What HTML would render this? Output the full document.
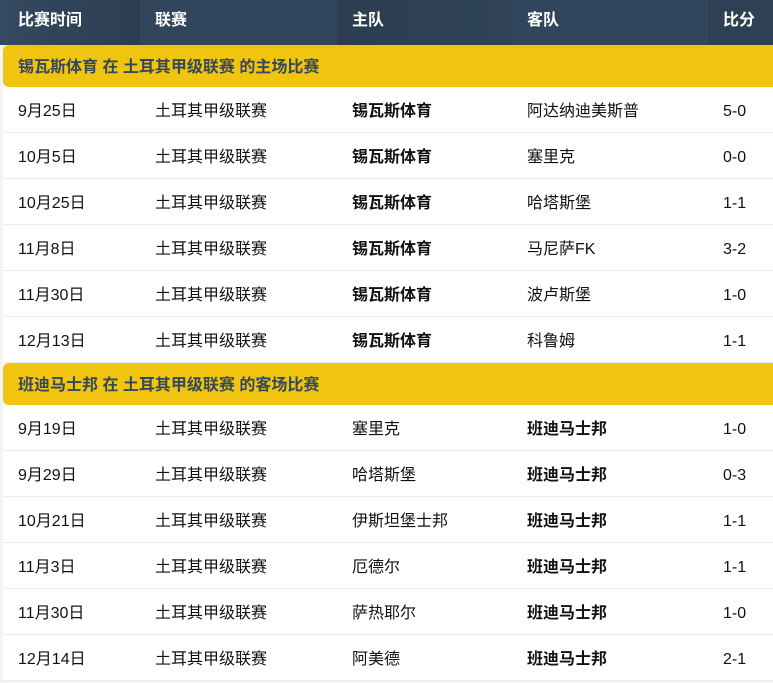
<!DOCTYPE html>
<html><head><meta charset="utf-8"><style>
body{margin:0;background:#f4f4f4;font-family:"Liberation Sans","Noto Sans CJK SC",sans-serif;width:773px;height:683px;overflow:hidden}
.w{position:absolute;left:3px;top:0;width:770px}
.h{position:relative;height:45px;background:#2f4256;color:#fff;font-weight:bold;font-size:16px}
.h div{position:absolute;top:0;height:45px;line-height:42px}
.b{position:relative;height:42px;background:#f1c40f;color:#34495e;font-weight:bold;font-size:16px;line-height:45px;padding-left:15px;border-radius:6px 0 0 6px}
.r{position:relative;height:45px;background:#fff;border-bottom:1px solid #ececec;font-size:16px;color:#111}
.r span{position:absolute;top:2px;line-height:45px}
.bo{font-weight:bold}
</style></head><body>
<div class="w">
<div class="h">
<div style="left:-3px;width:140px;background:linear-gradient(90deg,#344a60,#2c3d50);padding-left:18px;box-sizing:border-box">比赛时间</div>
<div style="left:137px;width:197px;background:#31465c;padding-left:15px;box-sizing:border-box">联赛</div>
<div style="left:334px;width:175px;background:linear-gradient(90deg,#2c3d50,#2f4358);padding-left:15px;box-sizing:border-box">主队</div>
<div style="left:509px;width:196px;background:#31465c;padding-left:15px;box-sizing:border-box">客队</div>
<div style="left:705px;width:65px;background:#2e4054;padding-left:15px;box-sizing:border-box">比分</div>
</div>
<div class="b">锡瓦斯体育 在 土耳其甲级联赛 的主场比赛</div>
<div class="r"><span style="left:15px">9月25日</span><span style="left:152px">土耳其甲级联赛</span><span class="bo" style="left:349px">锡瓦斯体育</span><span style="left:524px">阿达纳迪美斯普</span><span style="left:720px">5-0</span></div>
<div class="r"><span style="left:15px">10月5日</span><span style="left:152px">土耳其甲级联赛</span><span class="bo" style="left:349px">锡瓦斯体育</span><span style="left:524px">塞里克</span><span style="left:720px">0-0</span></div>
<div class="r"><span style="left:15px">10月25日</span><span style="left:152px">土耳其甲级联赛</span><span class="bo" style="left:349px">锡瓦斯体育</span><span style="left:524px">哈塔斯堡</span><span style="left:720px">1-1</span></div>
<div class="r"><span style="left:15px">11月8日</span><span style="left:152px">土耳其甲级联赛</span><span class="bo" style="left:349px">锡瓦斯体育</span><span style="left:524px">马尼萨FK</span><span style="left:720px">3-2</span></div>
<div class="r"><span style="left:15px">11月30日</span><span style="left:152px">土耳其甲级联赛</span><span class="bo" style="left:349px">锡瓦斯体育</span><span style="left:524px">波卢斯堡</span><span style="left:720px">1-0</span></div>
<div class="r"><span style="left:15px">12月13日</span><span style="left:152px">土耳其甲级联赛</span><span class="bo" style="left:349px">锡瓦斯体育</span><span style="left:524px">科鲁姆</span><span style="left:720px">1-1</span></div>
<div class="b">班迪马士邦 在 土耳其甲级联赛 的客场比赛</div>
<div class="r"><span style="left:15px">9月19日</span><span style="left:152px">土耳其甲级联赛</span><span style="left:349px">塞里克</span><span class="bo" style="left:524px">班迪马士邦</span><span style="left:720px">1-0</span></div>
<div class="r"><span style="left:15px">9月29日</span><span style="left:152px">土耳其甲级联赛</span><span style="left:349px">哈塔斯堡</span><span class="bo" style="left:524px">班迪马士邦</span><span style="left:720px">0-3</span></div>
<div class="r"><span style="left:15px">10月21日</span><span style="left:152px">土耳其甲级联赛</span><span style="left:349px">伊斯坦堡士邦</span><span class="bo" style="left:524px">班迪马士邦</span><span style="left:720px">1-1</span></div>
<div class="r"><span style="left:15px">11月3日</span><span style="left:152px">土耳其甲级联赛</span><span style="left:349px">厄德尔</span><span class="bo" style="left:524px">班迪马士邦</span><span style="left:720px">1-1</span></div>
<div class="r"><span style="left:15px">11月30日</span><span style="left:152px">土耳其甲级联赛</span><span style="left:349px">萨热耶尔</span><span class="bo" style="left:524px">班迪马士邦</span><span style="left:720px">1-0</span></div>
<div class="r"><span style="left:15px">12月14日</span><span style="left:152px">土耳其甲级联赛</span><span style="left:349px">阿美德</span><span class="bo" style="left:524px">班迪马士邦</span><span style="left:720px">2-1</span></div>
</div>
</body></html>
